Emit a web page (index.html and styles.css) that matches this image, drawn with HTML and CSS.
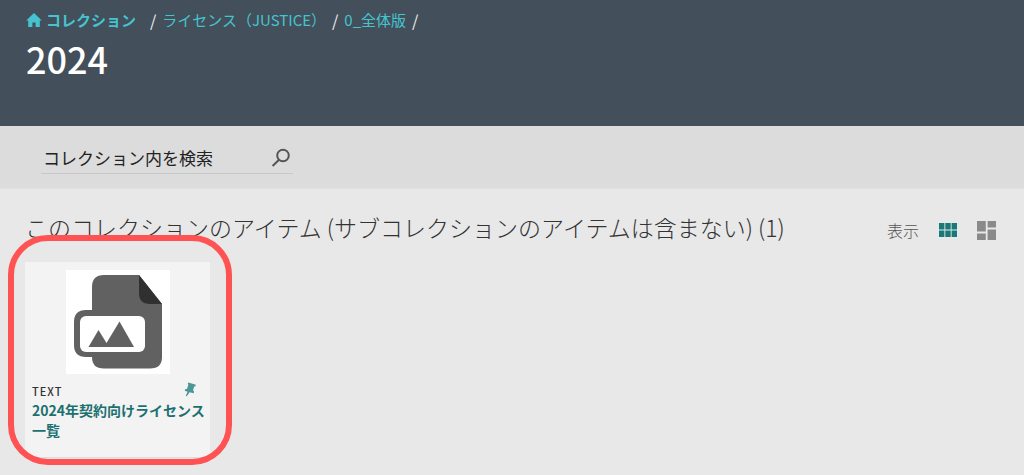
FILE: index.html
```html
<!DOCTYPE html>
<html lang="ja">
<head>
<meta charset="utf-8">
<meta name="viewport" content="width=device-width, initial-scale=1">
<title>2024</title>
<link rel="stylesheet" href="styles.css">
</head>
<body>
<header class="hero">
  <nav class="crumbs" aria-label="パンくず">
    <a class="crumb crumb-home" href="#"><svg class="home-icon" viewBox="0 0 16 16" aria-hidden="true"><path d="M8 1 15.8 8.400H13.800V15H9.600V10.500H6.400V15H2.200V8.400H.2Z"/></svg>コレクション</a>
    <span class="slash">/</span>
    <a class="crumb" href="#">ライセンス（JUSTICE）</a>
    <span class="slash">/</span>
    <a class="crumb" href="#">0_全体版</a>
    <span class="slash">/</span>
  </nav>
  <h1 class="title">2024</h1>
</header>
<form class="search-band">
  <div class="search">
    <input class="search-input" type="text" placeholder="コレクション内を検索" aria-label="コレクション内を検索">
    <button class="search-button" type="button" aria-label="検索"><svg class="search-icon" viewBox="0 0 20 20" aria-hidden="true"><circle cx="12" cy="7.5" r="5.8"/><path d="M8 11.800 1.600 18"/></svg></button>
  </div>
</form>
<main class="content">
  <div class="list-head">
    <h2 class="list-title">このコレクションのアイテム (サブコレクションのアイテムは含まない) (1)</h2>
    <div class="views">
      <span class="views-label">表示</span>
      <button class="view-button view-active" type="button" aria-label="グリッド"><svg class="grid-icon" viewBox="0 0 18 14" aria-hidden="true"><path d="M0 0h5.4v6.5H0zM6.3 0h5.4v6.5H6.3zM12.6 0H18v6.5h-5.4zM0 7.5h5.4V14H0zM6.3 7.5h5.4V14H6.3zM12.6 7.5H18V14h-5.4z"/></svg></button>
      <button class="view-button" type="button" aria-label="タイル"><svg class="tile-icon" viewBox="0 0 19 19" aria-hidden="true"><path d="M0 0h8.8v10.5H0zM10.6 0H19v6.4h-8.4zM0 12.5h8.8V19H0zM10.6 8.4H19V19h-8.4z"/></svg></button>
    </div>
  </div>
  <article class="card">
    <svg class="thumb" viewBox="0 0 104 104" role="img" aria-label="画像ファイル">
      <rect width="104" height="104" fill="#fff"/>
      <path fill="#616161" d="M38 5H73L96 34V87Q96 98.500 84 98.500H38Q26 98.500 26 87H20Q8 87 8 75V52Q8 40 20 40H26V17Q26 5 38 5Z"/>
      <path fill="#303030" d="M73 5 96 34H84Q73 34 73 23Z"/>
      <rect x="14" y="46" width="65" height="36" rx="6" fill="#fff"/>
      <path fill="#616161" d="M22.500 77 32.500 60 40.500 73 53.500 51.500 68 77Z"/>
    </svg>
    <div class="meta">
      <span class="type">TEXT</span>
      <svg class="pin" viewBox="0 0 12 14" aria-hidden="true"><path d="M4 .5 11 2.500 10.400 4.200 9.400 4.300 8.400 7.800 9.400 9 8.900 10.500 5.200 9.500 2.500 13.400 1.600 13 3.200 9 .6 8.200 1.100 6.800 2.800 6.200 4 2.600 3.400 1.800Z"/></svg>
    </div>
    <a class="item-link" href="#">2024年契約向けライセンス<br>一覧</a>
    <div class="highlight" aria-hidden="true"></div>
  </article>
</main>
</body>
</html>
```
FILE: styles.css
```css
* { box-sizing: border-box; }
body {
  margin: 0;
  min-height: 100vh;
  background: #e8e8e8;
  color: #333;
  font-family: "Noto Sans CJK JP", sans-serif;
}
a { text-decoration: none; }
button { margin: 0; padding: 0; border: 0; background: none; cursor: pointer; }
svg { display: block; }

.hero { padding: 8px 26px 41px; background: #434f5a; }
.crumbs { display: flex; align-items: center; font-size: 15px; line-height: 24px; }
.crumb { color: #45c4cf; font-weight: 400; }
.crumb-home { display: flex; align-items: center; gap: 4px; margin-right: 8px; font-weight: 700; }
.home-icon { width: 16px; height: 16px; fill: #45c4cf; }
.slash { padding: 0 6px; color: #eee; font-size: 16px; }
.title { margin: 0; color: #fff; font-size: 36px; font-weight: 500; line-height: 53px; }

.search-band { padding: 16px 41px 14px; background: #dcdcdc; border-bottom: 1px solid #e2e2e2; }
.search { display: flex; align-items: center; width: 252px; border-bottom: 1px solid #c8c8c8; }
.search-input {
  flex: 1;
  min-width: 0;
  padding: 0 2px;
  border: 0;
  background: none;
  color: #222;
  font: 400 17px/31px "Noto Sans CJK JP", sans-serif;
}
.search-input::placeholder { color: #222; opacity: 1; }
.search-button { margin-right: 2px; }
.search-icon { width: 20px; height: 20px; fill: none; stroke: #555; stroke-width: 2; }

.content { padding: 22px 28px 18px 25px; }
.list-head { display: flex; align-items: center; justify-content: space-between; }
.list-title { margin: 0; font-size: 23px; font-weight: 300; line-height: 32px; }
.views { display: flex; align-items: center; gap: 20px; padding-top: 6px; }
.views-label { color: #555; font-size: 16px; font-weight: 300; line-height: 24px; }
.view-button { fill: #8a8a8a; }
.view-active { fill: #197878; }
.grid-icon { width: 18px; height: 14px; }
.tile-icon { width: 19px; height: 19px; }

.card { position: relative; width: 185px; margin-top: 19px; padding: 8px 7px 17px; background: #f3f3f3; border-bottom: 1px solid #ddd; }
.thumb { width: 104px; height: 104px; margin: 0 auto; }
.meta { display: flex; align-items: flex-start; justify-content: space-between; padding: 8px 6px 0 0; }
.type { font-size: 11px; font-weight: 500; line-height: 18px; letter-spacing: 1px; }
.pin { width: 13px; height: 15px; fill: #4b9696; }
.item-link { display: block; color: #1c7070; font-size: 14px; font-weight: 700; line-height: 20px; white-space: nowrap; }
.highlight { position: absolute; inset: -27px -22px -8px -17px; border: 6px solid #ff5252; border-radius: 40px; pointer-events: none; }
```
